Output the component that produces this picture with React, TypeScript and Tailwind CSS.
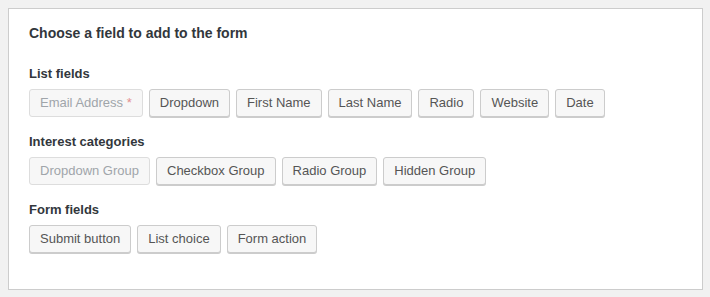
const listFields = ['Dropdown', 'First Name', 'Last Name', 'Radio', 'Website', 'Date']
const interestFields = ['Checkbox Group', 'Radio Group', 'Hidden Group']
const formFields = ['Submit button', 'List choice', 'Form action']

const FieldButton = ({ label, disabled, required }: { label: string; disabled?: boolean; required?: boolean }) => (
  <button
    type="button"
    disabled={disabled}
    className={`h-[28px] px-[10px] rounded-[3px] border text-[13px] leading-[26px] bg-[#f7f7f7] whitespace-nowrap ${
      disabled
        ? 'border-[#dddddd] text-[#a0a5aa]'
        : 'border-[#cccccc] text-[#555555] shadow-[0_1px_0_#cccccc]'
    }`}
  >
    {label}
    {required && <span className="text-[#e38f8f]"> *</span>}
  </button>
)

const Section = ({ title, children }: { title: string; children: React.ReactNode }) => (
  <div>
    <h4 className="text-[13px] leading-[18px] font-bold text-[#32373c]">{title}</h4>
    <div className="mt-[6px] flex flex-wrap gap-[6px]">{children}</div>
  </div>
)

export default function App() {
  return (
    <div className="min-h-[297px] bg-[#f1f1f1] pt-2 pl-2 font-['Liberation_Sans',Arial,sans-serif]">
      <div className="w-[695px] bg-white border border-[#cccccc] px-5 pt-[14px] pb-[36px]">
        <h3 className="text-[14px] leading-5 font-bold text-[#32373c]">Choose a field to add to the form</h3>
        <div className="mt-[22px] flex flex-col gap-4">
          <Section title="List fields">
            <FieldButton label="Email Address" disabled required />
            {listFields.map((f) => (
              <FieldButton key={f} label={f} />
            ))}
          </Section>
          <Section title="Interest categories">
            <FieldButton label="Dropdown Group" disabled />
            {interestFields.map((f) => (
              <FieldButton key={f} label={f} />
            ))}
          </Section>
          <Section title="Form fields">
            {formFields.map((f) => (
              <FieldButton key={f} label={f} />
            ))}
          </Section>
        </div>
      </div>
    </div>
  )
}
